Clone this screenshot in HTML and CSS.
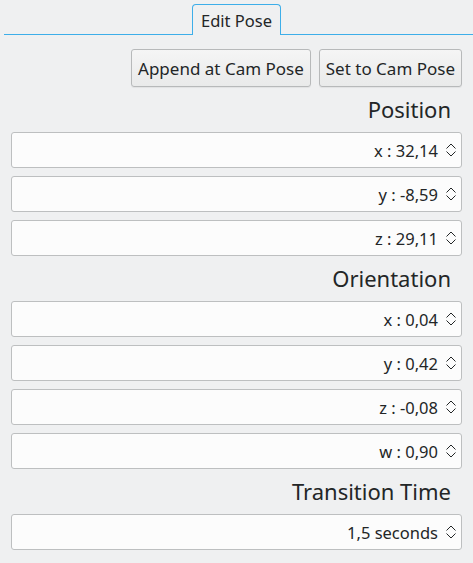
FILE: index.html
```html
<!DOCTYPE html>
<html>
<head>
<meta charset="utf-8">
<link rel="stylesheet" href="styles.css">
</head>
<body>
<div class="tabbar">
  <div class="tab">Edit Pose</div>
</div>
<div class="panel">
  <div class="buttons">
    <button class="btn">Append at Cam Pose</button>
    <button class="btn">Set to Cam Pose</button>
  </div>
  <div class="heading">Position</div>
  <div class="spin"><span>x : 32,14</span><svg class="arrows" viewBox="0 0 10 14" width="10" height="14"><path d="M0.5 5.5 L5 1 L9.5 5.5 M0.5 8.5 L5 13 L9.5 8.5" fill="none" stroke="#232627" stroke-width="1"/></svg></div>
  <div class="spin"><span>y : -8,59</span><svg class="arrows" viewBox="0 0 10 14" width="10" height="14"><path d="M0.5 5.5 L5 1 L9.5 5.5 M0.5 8.5 L5 13 L9.5 8.5" fill="none" stroke="#232627" stroke-width="1"/></svg></div>
  <div class="spin"><span>z : 29,11</span><svg class="arrows" viewBox="0 0 10 14" width="10" height="14"><path d="M0.5 5.5 L5 1 L9.5 5.5 M0.5 8.5 L5 13 L9.5 8.5" fill="none" stroke="#232627" stroke-width="1"/></svg></div>
  <div class="heading">Orientation</div>
  <div class="spin"><span>x : 0,04</span><svg class="arrows" viewBox="0 0 10 14" width="10" height="14"><path d="M0.5 5.5 L5 1 L9.5 5.5 M0.5 8.5 L5 13 L9.5 8.5" fill="none" stroke="#232627" stroke-width="1"/></svg></div>
  <div class="spin"><span>y : 0,42</span><svg class="arrows" viewBox="0 0 10 14" width="10" height="14"><path d="M0.5 5.5 L5 1 L9.5 5.5 M0.5 8.5 L5 13 L9.5 8.5" fill="none" stroke="#232627" stroke-width="1"/></svg></div>
  <div class="spin"><span>z : -0,08</span><svg class="arrows" viewBox="0 0 10 14" width="10" height="14"><path d="M0.5 5.5 L5 1 L9.5 5.5 M0.5 8.5 L5 13 L9.5 8.5" fill="none" stroke="#232627" stroke-width="1"/></svg></div>
  <div class="spin"><span>w : 0,90</span><svg class="arrows" viewBox="0 0 10 14" width="10" height="14"><path d="M0.5 5.5 L5 1 L9.5 5.5 M0.5 8.5 L5 13 L9.5 8.5" fill="none" stroke="#232627" stroke-width="1"/></svg></div>
  <div class="heading">Transition Time</div>
  <div class="spin"><span>1,5 seconds</span><svg class="arrows" viewBox="0 0 10 14" width="10" height="14"><path d="M0.5 5.5 L5 1 L9.5 5.5 M0.5 8.5 L5 13 L9.5 8.5" fill="none" stroke="#232627" stroke-width="1"/></svg></div>
</div>
</body>
</html>
```
FILE: styles.css
```css
html, body {
  margin: 0;
  padding: 0;
  background: #eff0f1;
  font-family: "Noto Sans", "DejaVu Sans", sans-serif;
  color: #232627;
}
.tabbar {
  margin-left: 4px;
  border-bottom: 1px solid #3daee9;
  display: flex;
  justify-content: center;
  align-items: flex-end;
  box-sizing: border-box;
  height: 35px;
}
.tab {
  position: relative;
  top: 1px;
  margin-left: -4px;
  height: 31px;
  padding: 1px 8px 0 8px;
  border: 1px solid #3daee9;
  border-bottom: none;
  border-radius: 4px 4px 0 0;
  background: #eff0f1;
  font-size: 16.5px;
  display: flex;
  align-items: center;
  justify-content: center;
  box-sizing: border-box;
}
.panel {
  padding: 14px 11px 0 11px;
  display: flex;
  flex-direction: column;
  gap: 8px;
}
.buttons {
  display: flex;
  justify-content: flex-end;
  gap: 8px;
}
.btn {
  font-family: "Noto Sans", "DejaVu Sans", sans-serif;
  font-size: 17px;
  color: #232627;
  height: 38px;
  padding: 0 6px;
  border: 1px solid #b7b9ba;
  border-radius: 3px;
  background: linear-gradient(#f5f5f5, #e9eaea);
  box-shadow: 0 1px 1px rgba(0,0,0,0.06);
}
.heading {
  height: 29px;
  line-height: 29px;
  font-size: 22px;
  text-align: right;
  padding-right: 11px;
}
.spin {
  height: 36px;
  box-sizing: border-box;
  border: 1px solid #bdbfc0;
  border-radius: 3px;
  background: #fcfcfc;
  display: flex;
  justify-content: flex-end;
  align-items: center;
  font-size: 16.5px;
  padding-right: 5px;
  gap: 8px;
}
.arrows {
  display: block;
}
```
